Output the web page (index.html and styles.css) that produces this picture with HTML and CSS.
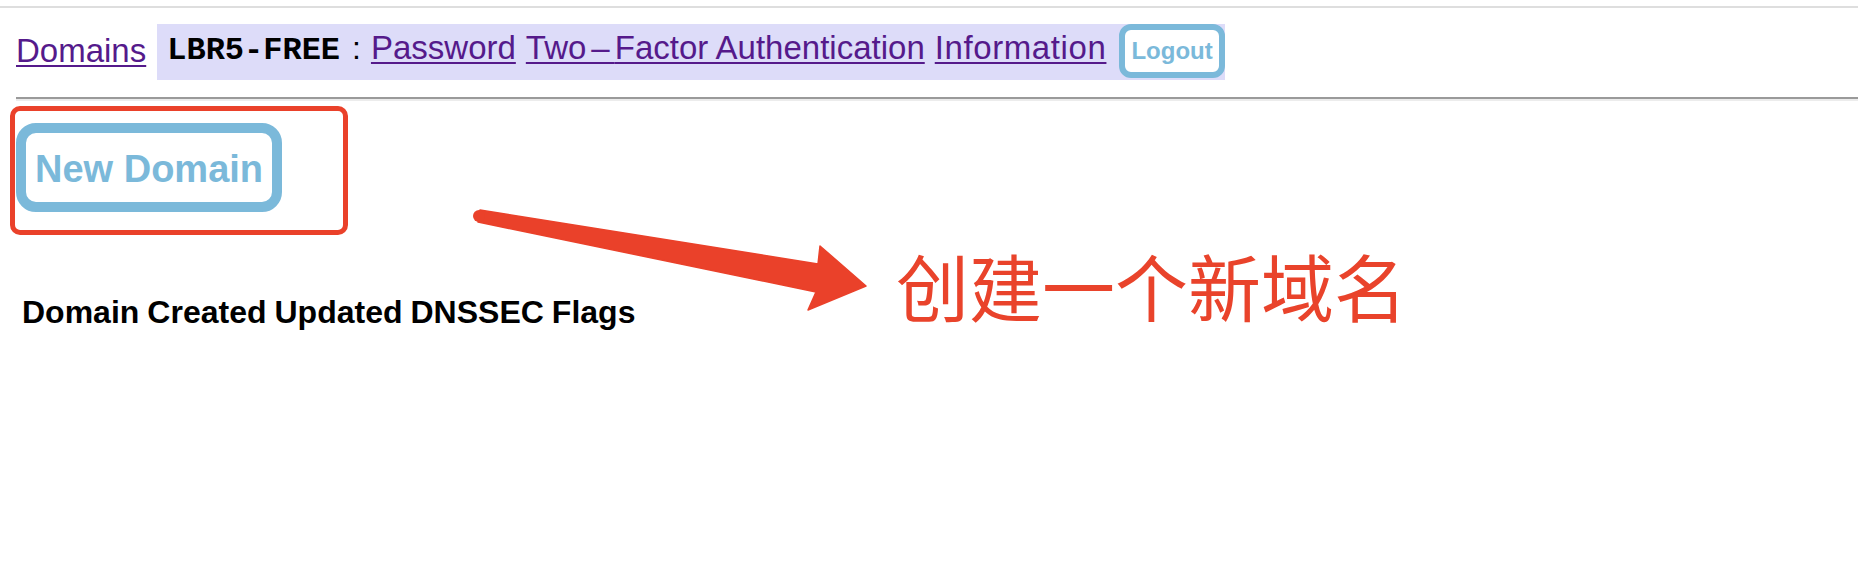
FILE: index.html
```html
<!DOCTYPE html>
<html lang="en">
<head>
<meta charset="utf-8">
<title>Domains</title>
<link rel="stylesheet" href="styles.css">
</head>
<body>
<div class="topline"></div>
<div class="page">
  <nav class="nav">
    <a class="link" href="#">Domains</a>
    <div class="account">
      <code class="user">LBR5-FREE</code>
      <span class="colon">:</span>
      <a class="link" href="#">Password</a>
      <a class="link" href="#">Tw<span class="dash">o–</span>Factor Authentication</a>
      <a class="link info" href="#">Information</a>
      <button class="logout">Logout</button>
    </div>
  </nav>
  <hr class="rule">
  <div class="actions">
    <button class="new-domain">New Domain</button>
  </div>
  <table class="domains">
    <thead>
      <tr><th>Domain</th><th>Created</th><th>Updated</th><th>DNSSEC</th><th>Flags</th></tr>
    </thead>
  </table>
</div>

<div class="note-box"></div>
<svg class="note-arrow" width="410" height="120" viewBox="0 0 410 120" aria-hidden="true">
  <path d="M10 10 L348 64 L350 46 L396 86 L338 110 L346 92 L8 22 Z" fill="#ea412a" stroke="#ea412a" stroke-width="1.5" stroke-linejoin="round"/>
  <circle cx="9" cy="16" r="6" fill="#ea412a"/>
</svg>
<div class="note-text">创建一个新域名</div>
</body>
</html>
```

FILE: styles.css
```css
html, body {
  margin: 0;
  padding: 0;
  background: #ffffff;
}

body {
  position: relative;
  width: 1858px;
  height: 564px;
  overflow: hidden;
  font-family: "Liberation Sans", Arial, sans-serif;
  color: #000;
}

.topline {
  margin-top: 6px;
  height: 2px;
  background: #dedede;
}

.page {
  padding: 0 0 0 16px;
}

.nav {
  display: flex;
  align-items: flex-start;
  margin-top: 16px;
  height: 56px;
}

.link {
  font-size: 33px;
  color: #551a8b;
  text-decoration: underline;
  text-decoration-thickness: 2px;
  text-underline-offset: 3px;
}

.dash {
  letter-spacing: 5px;
}

.info {
  letter-spacing: 0.6px;
}

.nav > .link {
  margin-top: 8px;
}

.account {
  display: flex;
  align-items: baseline;
  gap: 10px;
  margin-left: 11px;
  padding: 0 0 2px 10px;
  background: #dddcf9;
}

.user {
  font-family: "Liberation Mono", "Courier New", monospace;
  font-weight: bold;
  font-size: 32px;
}

.colon {
  font-size: 32px;
  margin-left: 2px;
}

.logout {
  margin-left: 3px;
  font-family: "Liberation Sans", Arial, sans-serif;
  font-weight: bold;
  font-size: 24px;
  line-height: 28px;
  color: #7bb9da;
  background: #fff;
  border: 6px solid #7bb9da;
  border-radius: 12px;
  padding: 7px 6px;
  cursor: pointer;
}

.rule {
  margin: 17px 0 0 0;
  height: 0;
  border: 0;
  border-top: 2px solid #9a9a9a;
  border-bottom: 2px solid #ececec;
}

.actions {
  margin-top: 22px;
}

.new-domain {
  font-family: "Liberation Sans", Arial, sans-serif;
  font-weight: bold;
  font-size: 38px;
  line-height: 44px;
  color: #7bb9da;
  background: #fff;
  border: 10px solid #7bb9da;
  border-radius: 20px;
  padding: 14px 9px 11px 9px;
  cursor: pointer;
}

.domains {
  margin-top: 76px;
  border-spacing: 4px;
}

.domains th {
  padding: 2px;
  font-size: 32px;
  font-weight: bold;
  text-align: left;
}

.note-box {
  position: absolute;
  left: 10px;
  top: 106px;
  width: 338px;
  height: 129px;
  box-sizing: border-box;
  border: 5px solid #ea412a;
  border-radius: 10px;
}

.note-arrow {
  position: absolute;
  left: 470px;
  top: 200px;
}

.note-text {
  position: absolute;
  left: 896px;
  top: 248px;
  font-family: "Noto Sans CJK SC", "Noto Sans", sans-serif;
  font-size: 73px;
  line-height: 1;
  color: #e9432b;
  white-space: nowrap;
}
```
